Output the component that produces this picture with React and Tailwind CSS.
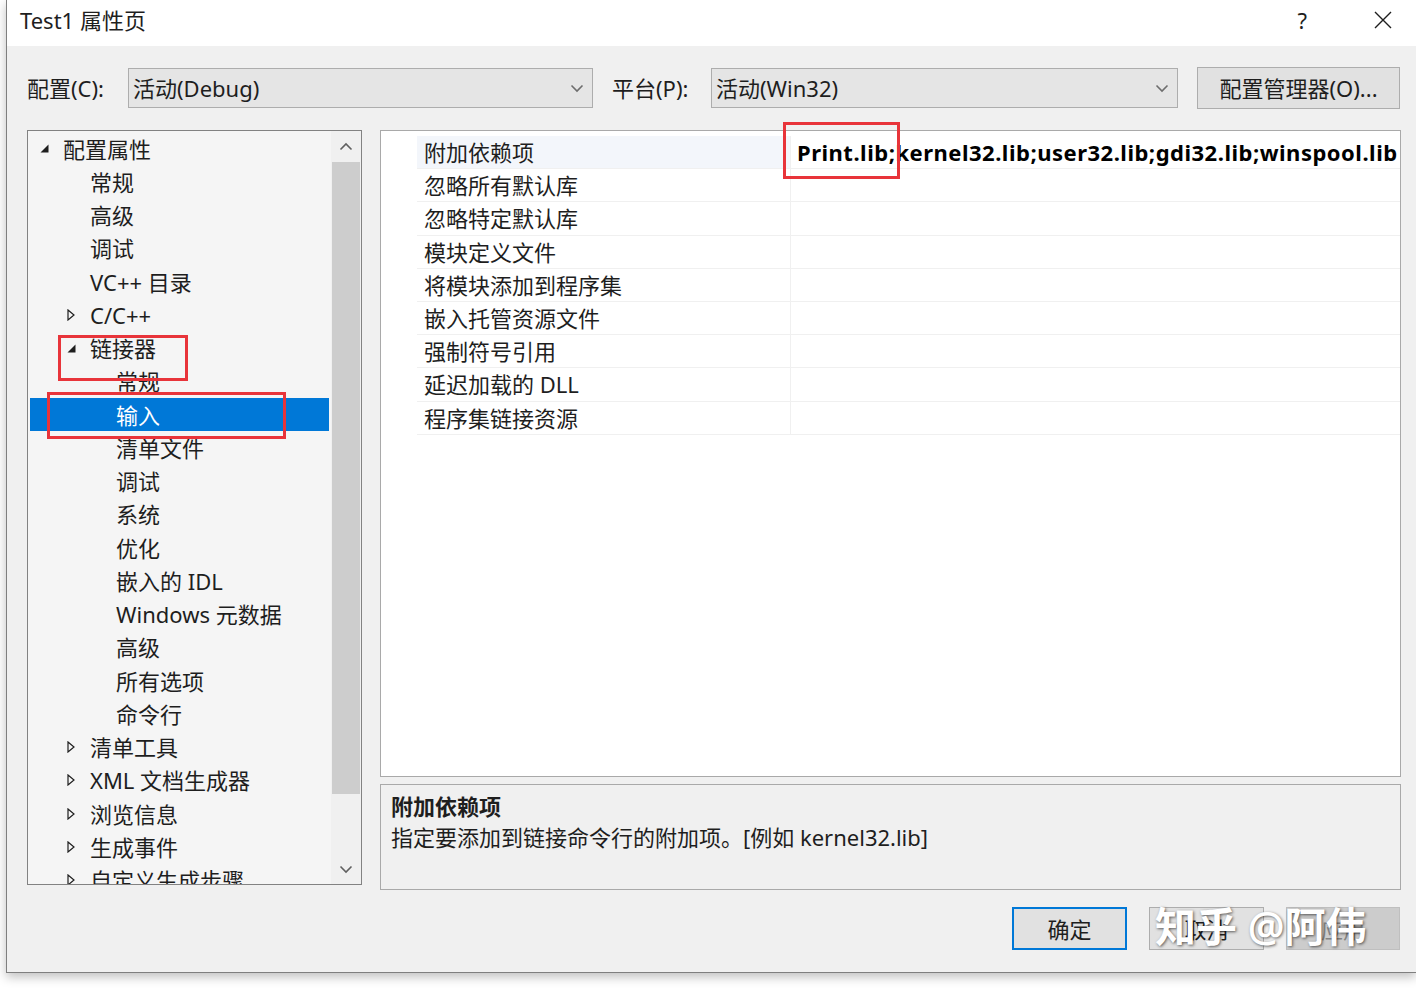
import React from 'react';

const FONT = "font-['Noto_Sans','Noto_Sans_CJK_SC',sans-serif]";

const TREE = [
  { label: '配置属性', level: 0, icon: 'open' },
  { label: '常规', level: 1 },
  { label: '高级', level: 1 },
  { label: '调试', level: 1 },
  { label: 'VC++ 目录', level: 1 },
  { label: 'C/C++', level: 1, icon: 'closed' },
  { label: '链接器', level: 1, icon: 'open' },
  { label: '常规', level: 2 },
  { label: '输入', level: 2, selected: true },
  { label: '清单文件', level: 2 },
  { label: '调试', level: 2 },
  { label: '系统', level: 2 },
  { label: '优化', level: 2 },
  { label: '嵌入的 IDL', level: 2 },
  { label: 'Windows 元数据', level: 2 },
  { label: '高级', level: 2 },
  { label: '所有选项', level: 2 },
  { label: '命令行', level: 2 },
  { label: '清单工具', level: 1, icon: 'closed' },
  { label: 'XML 文档生成器', level: 1, icon: 'closed' },
  { label: '浏览信息', level: 1, icon: 'closed' },
  { label: '生成事件', level: 1, icon: 'closed' },
  { label: '自定义生成步骤', level: 1, icon: 'closed' },
];

const PROPS = [
  '附加依赖项',
  '忽略所有默认库',
  '忽略特定默认库',
  '模块定义文件',
  '将模块添加到程序集',
  '嵌入托管资源文件',
  '强制符号引用',
  '延迟加载的 DLL',
  '程序集链接资源',
];

const indent = ['pl-[12px]', 'pl-[39px]', 'pl-[65px]'];

function Chevron({ up = false, className = '' }) {
  return (
    <svg width="14" height="9" viewBox="0 0 14 9" className={className}>
      <path
        d={up ? 'M1.5 7.5 L7 2 L12.5 7.5' : 'M1.5 1.5 L7 7 L12.5 1.5'}
        fill="none"
        stroke="currentColor"
        strokeWidth="1.6"
      />
    </svg>
  );
}

function TreeIcon({ kind }) {
  if (kind === 'open') {
    return (
      <svg width="9" height="9" viewBox="0 0 9 9">
        <polygon points="8.5,0.5 8.5,8.5 0.5,8.5" fill="#1e1e1e" />
      </svg>
    );
  }
  if (kind === 'closed') {
    return (
      <svg width="8" height="12" viewBox="0 0 8 12">
        <polygon points="1,1 7,6 1,11" fill="none" stroke="#1e1e1e" strokeWidth="1.2" />
      </svg>
    );
  }
  return null;
}

function Combo({ value, width }) {
  return (
    <div className={`${width} h-[40px] bg-[#e5e5e5] border border-[#adadad] flex items-center justify-between pl-[4px] pr-[8px]`}>
      <span className="text-[22px] leading-none text-[#1e1e1e]">{value}</span>
      <Chevron className="text-[#6d6d6d]" />
    </div>
  );
}

export default function App() {
  return (
    <div className={`w-[1416px] h-[988px] bg-white overflow-hidden ${FONT}`}>
      <div className="ml-[6px] w-[1410px] h-[973px] border-l border-b border-[#7f7f7f] shadow-[0_4px_10px_rgba(0,0,0,0.25)] flex flex-col relative">
        {/* title bar */}
        <div className="h-[46px] bg-white flex items-center pl-[13px] pr-[24px] pb-[7px] shrink-0">
          <span className="text-[22px] leading-none text-[#1e1e1e]">Test1 属性页</span>
          <span className="ml-auto text-[22px] leading-none text-[#1e1e1e]">?</span>
          <svg width="18" height="18" viewBox="0 0 18 18" className="ml-[67px]">
            <path d="M1 1 L17 17 M17 1 L1 17" stroke="#1e1e1e" strokeWidth="1.4" />
          </svg>
        </div>

        {/* body */}
        <div className="flex-1 bg-[#f0f0f0] pl-[20px] pr-[16px] pt-[20px] flex flex-col text-[#1e1e1e]">
          {/* config row */}
          <div className="flex items-center h-[44px] shrink-0">
            <span className="w-[101px] text-[22px] leading-none">配置(C):</span>
            <Combo value="活动(Debug)" width="w-[465px]" />
            <span className="ml-[19px] w-[99px] text-[22px] leading-none">平台(P):</span>
            <Combo value="活动(Win32)" width="w-[467px]" />
            <div className="ml-[19px] w-[203px] h-[42px] bg-[#e1e1e1] border border-[#adadad] flex items-center justify-center text-[22px] leading-none">
              配置管理器(O)...
            </div>
          </div>

          {/* main area */}
          <div className="flex items-start mt-[20px]">
            {/* tree */}
            <div className="w-[335px] h-[755px] shrink-0 border border-[#828282] bg-[#f5f5f5] flex overflow-hidden">
              <div className="flex-1 pt-[1px] overflow-hidden">
                {TREE.map((item, i) => (
                  <div
                    key={i}
                    className={`h-[33.25px] flex items-center ${indent[item.level]} ${
                      item.selected ? 'bg-[#0078d7] text-white ml-[2px] mr-[2px]' : ''
                    }`}
                  >
                    <div className={`w-[23px] flex items-center ${item.selected ? '-ml-[2px]' : ''}`}>
                      <TreeIcon kind={item.icon} />
                    </div>
                    <span className="text-[22px] leading-none whitespace-nowrap">{item.label}</span>
                  </div>
                ))}
              </div>
              <div className="w-[30px] flex flex-col bg-[#f0f0f0]">
                <div className="h-[31px] flex items-center justify-center text-[#606060]">
                  <Chevron up />
                </div>
                <div className="mx-[1px] h-[632px] bg-[#cdcdcd]" />
                <div className="flex-1 flex items-end justify-center pb-[10px] text-[#606060]">
                  <Chevron />
                </div>
              </div>
            </div>

            {/* right column */}
            <div className="ml-[18px] w-[1021px] min-w-0 shrink-0 flex flex-col">
              <div className="h-[647px] shrink-0 border border-[#a9a9a9] bg-white pt-[5px] overflow-hidden">
                {PROPS.map((p, i) => (
                  <div key={i} className="h-[33.2px] flex">
                    <div className="w-[36px] shrink-0" />
                    <div
                      className={`w-[373px] shrink-0 flex items-center pl-[7px] border-b border-[#f0f0f0] ${
                        i === 0 ? 'bg-[#f3f6fb]' : ''
                      }`}
                    >
                      <span className="text-[22px] leading-none whitespace-nowrap">{p}</span>
                    </div>
                    <div className="flex-1 min-w-0 flex items-center pl-[6px] border-b border-l border-[#f0f0f0] overflow-hidden">
                      {i === 0 && (
                        <span className="text-[22px] leading-none font-bold whitespace-nowrap text-black tracking-[0.5px]">
                          Print.lib;kernel32.lib;user32.lib;gdi32.lib;winspool.lib
                        </span>
                      )}
                    </div>
                  </div>
                ))}
              </div>

              <div className="mt-[7px] h-[106px] shrink-0 border border-[#a9a9a9] bg-[#f0f0f0] pl-[10px] pt-[7px]">
                <div className="h-[28px] flex items-center text-[22px] leading-none font-bold">附加依赖项</div>
                <div className="h-[34px] flex items-center text-[22px] leading-none">
                  指定要添加到链接命令行的附加项。[例如 kernel32.lib]
                </div>
              </div>

              {/* buttons */}
              <div className="mt-[17px] flex justify-end gap-[22px] pr-[1px] shrink-0">
                <div className="w-[115px] h-[43px] bg-[#e1e1e1] border-2 border-[#0078d7] flex items-center justify-center text-[22px] leading-none">
                  确定
                </div>
                <div className="w-[115px] h-[43px] bg-[#e1e1e1] border border-[#adadad] flex items-center justify-center text-[22px] leading-none">
                  取消
                </div>
                <div className="w-[114px] h-[43px] bg-[#cccccc] border border-[#bfbfbf] flex items-center justify-center text-[22px] leading-none text-[#838383]">
                  应用
                </div>
              </div>
            </div>
          </div>
        </div>

        {/* red annotation boxes */}
        <div className="absolute left-[51px] top-[335px] w-[130px] h-[46px] border-[3px] border-[#e8343a]" />
        <div className="absolute left-[40px] top-[392px] w-[239px] h-[47px] border-[3px] border-[#e8343a]" />
        <div className="absolute left-[776px] top-[122px] w-[117px] h-[57px] border-[3px] border-[#e8343a]" />

        {/* watermark */}
        <div className="absolute left-[1148px] top-[906px] text-[41px] leading-none text-white font-semibold [text-shadow:1px_1px_3px_rgba(0,0,0,0.6)] whitespace-nowrap">
          知乎 @阿伟
        </div>
      </div>
    </div>
  );
}
